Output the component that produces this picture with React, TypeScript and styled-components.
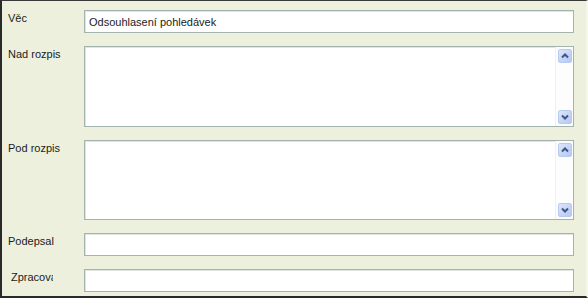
import styled, { createGlobalStyle } from 'styled-components';
import type { FC } from 'react';

const GlobalStyle = createGlobalStyle`
  html, body {
    margin: 0;
    padding: 0;
    background: #ffffff;
  }
  * {
    box-sizing: border-box;
  }
`;

const Panel = styled.div`
  width: 588px;
  height: 298px;
  background: #edf0dc;
  border-top: 1px solid #3a3a3a;
  border-left: 2px solid #2a2a2a;
  border-bottom: 2px solid #2a2a2a;
  border-right: 2px solid #f6f8ec;
  padding: 9px 0 0 6px;
  display: grid;
  grid-template-columns: 76px 490px;
  grid-template-rows: 23px 81px 80px 23px 23px;
  row-gap: 13px;
  font-family: 'Liberation Sans', Arial, sans-serif;
  font-size: 11px;
  color: #1c1c1c;
`;

const Label = styled.label<{ $indent?: number; $clip?: number }>`
  padding-top: 2px;
  padding-left: ${(p) => p.$indent ?? 0}px;
  white-space: nowrap;
  overflow: hidden;
  max-width: ${(p) => (p.$clip ? `${p.$clip}px` : 'none')};
  line-height: 13px;
`;

const TextInput = styled.input`
  display: block;
  height: 23px;
  width: 490px;
  border: 1px solid #a3b3ae;
  box-shadow: inset 1px 1px 0 #dfe5e2;
  background: #ffffff;
  padding: 0 4px;
  font-family: 'Liberation Sans', Arial, sans-serif;
  font-size: 11px;
  color: #1c1c1c;
  outline: none;
`;

const AreaBox = styled.div`
  height: 100%;
  border: 1px solid #a3b3ae;
  box-shadow: inset 1px 1px 0 #dfe5e2;
  background: #ffffff;
  display: flex;
`;

const Area = styled.textarea`
  flex: 1;
  border: none;
  resize: none;
  outline: none;
  background: transparent;
  overflow: hidden;
  font-family: 'Liberation Sans', Arial, sans-serif;
  font-size: 11px;
`;

const ScrollBar = styled.div`
  width: 18px;
  border-left: 1px solid #eef0f2;
  background: #fdfdfe;
  display: flex;
  flex-direction: column;
  justify-content: space-between;
  padding: 2px 1px 2px 2px;
`;

const ArrowButton = styled.div`
  width: 14px;
  height: 14px;
  border-radius: 2px;
  background: linear-gradient(135deg, #dde7fb 0%, #c3d3f6 60%, #b5c8f1 100%);
  border: 1px solid #b9caf0;
  display: flex;
  align-items: center;
  justify-content: center;
`;

const Chevron: FC<{ up?: boolean }> = ({ up }) => (
  <svg width="8" height="6" viewBox="0 0 8 6">
    <path
      d={up ? 'M1 4.5 L4 1.5 L7 4.5' : 'M1 1.5 L4 4.5 L7 1.5'}
      fill="none"
      stroke="#3e5683"
      strokeWidth="2"
    />
  </svg>
);

const MemoField: FC = () => (
  <AreaBox>
    <Area />
    <ScrollBar>
      <ArrowButton>
        <Chevron up />
      </ArrowButton>
      <ArrowButton>
        <Chevron />
      </ArrowButton>
    </ScrollBar>
  </AreaBox>
);

const App: FC = () => {
  return (
    <>
      <GlobalStyle />
      <Panel>
        <Label>Věc</Label>
        <TextInput defaultValue="Odsouhlasení pohledávek" />

        <Label>Nad rozpis</Label>
        <MemoField />

        <Label>Pod rozpis</Label>
        <MemoField />

        <Label>Podepsal</Label>
        <TextInput />

        <Label $indent={3} $clip={45}>
          Zpracovatel
        </Label>
        <TextInput />
      </Panel>
    </>
  );
};

export default App;
